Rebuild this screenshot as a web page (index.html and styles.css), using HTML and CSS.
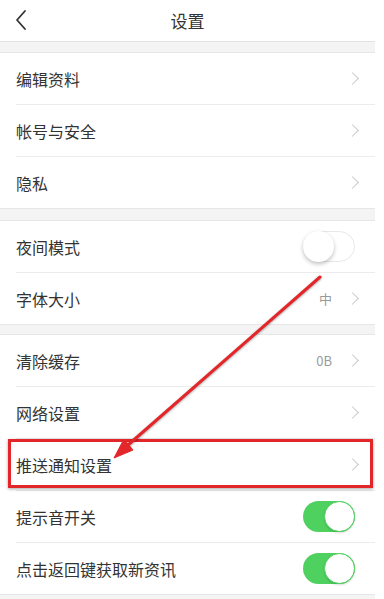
FILE: index.html
```html
<!DOCTYPE html>
<html lang="zh-CN">
<head>
<meta charset="utf-8">
<title>设置</title>
<link rel="stylesheet" href="styles.css">
</head>
<body>
<div class="app">
  <header class="topbar">
    <svg class="back" width="14" height="22" viewBox="0 0 14 22"><polyline points="11,2 3,11 11,20" fill="none" stroke="#333" stroke-width="1.8" stroke-linecap="round" stroke-linejoin="round"/></svg>
    <div class="title">设置</div>
  </header>

  <section class="group g1">
    <div class="row"><span class="label">编辑资料</span><span class="right"><span class="chev"></span></span></div>
    <div class="row"><span class="label">帐号与安全</span><span class="right"><span class="chev"></span></span></div>
    <div class="row"><span class="label">隐私</span><span class="right"><span class="chev"></span></span></div>
  </section>

  <section class="group g2">
    <div class="row"><span class="label">夜间模式</span><span class="right"><span class="toggle off"><span class="knob"></span></span></span></div>
    <div class="row"><span class="label">字体大小</span><span class="right"><span class="value">中</span><span class="chev"></span></span></div>
  </section>

  <section class="group g3">
    <div class="row"><span class="label">清除缓存</span><span class="right"><span class="value">0B</span><span class="chev"></span></span></div>
    <div class="row"><span class="label">网络设置</span><span class="right"><span class="chev"></span></span></div>
    <div class="row"><span class="label">推送通知设置</span><span class="right"><span class="chev"></span></span></div>
    <div class="row"><span class="label">提示音开关</span><span class="right"><span class="toggle on"><span class="knob"></span></span></span></div>
    <div class="row"><span class="label">点击返回键获取新资讯</span><span class="right"><span class="toggle on"><span class="knob"></span></span></span></div>
  </section>

  <div class="highlight"></div>
  <svg class="arrow" width="375" height="599" viewBox="0 0 375 599">
    <g fill="#e3262a" stroke="#e3262a">
      <line x1="320" y1="277" x2="128" y2="445" stroke-width="3" stroke-linecap="round" style="filter: drop-shadow(0 1px 1px rgba(0,0,0,0.35))"/>
      <polygon points="114,458 133,450 124,439" stroke-width="1" stroke-linejoin="round"/>
    </g>
  </svg>
</div>
</body>
</html>
```

FILE: styles.css
```css
html, body {
  margin: 0;
  padding: 0;
  background: #ffffff;
}
body {
  font-family: "Noto Sans CJK SC", "Noto Sans", sans-serif;
  color: #333333;
}
.app {
  position: relative;
  width: 375px;
  height: 599px;
  overflow: hidden;
  background: #f4f4f4;
}
.topbar {
  position: relative;
  height: 41px;
  background: #ffffff;
  border-bottom: 1px solid #e2e2e2;
  display: flex;
  align-items: center;
  justify-content: center;
}
.back {
  position: absolute;
  left: 14px;
  top: 9px;
}
.title {
  font-size: 17px;
  color: #333;
}
.group {
  background: #ffffff;
  border-top: 1px solid #e6e6e6;
}
.g1 {
  margin-top: 10px;
}
.g2 {
  margin-top: 11px;
}
.g3 {
  margin-top: 9px;
}
.row {
  height: 51px;
  margin-left: 16px;
  padding-right: 16px;
  display: flex;
  align-items: center;
  justify-content: space-between;
  border-bottom: 1px solid #ececec;
}
.group .row:last-child {
  margin-left: 0;
  padding-left: 16px;
  border-bottom-color: #e6e6e6;
}
.label {
  font-size: 16px;
  color: #333;
}
.right {
  display: flex;
  align-items: center;
}
.value {
  font-size: 13px;
  color: #9a9a9a;
  margin-right: 16px;
}
.chev {
  width: 8px;
  height: 8px;
  border-top: 1.3px solid #c9c9c9;
  border-right: 1.3px solid #c9c9c9;
  transform: rotate(45deg);
  margin-right: 2px;
}
.toggle {
  position: relative;
  width: 52px;
  height: 31px;
  border-radius: 16px;
  box-sizing: border-box;
  margin-right: 4px;
}
.toggle.off {
  background: #ffffff;
  border: 1.5px solid #e9e9e9;
}
.toggle.on {
  background: #4fd160;
}
.knob {
  position: absolute;
  top: 0;
  width: 31px;
  height: 31px;
  border-radius: 50%;
  background: #ffffff;
  box-sizing: border-box;
}
.toggle.off .knob {
  left: -1.5px;
  top: -1.5px;
  box-shadow: 0 2px 4px rgba(0,0,0,0.25);
}
.toggle.on .knob {
  right: 0;
  border: 1.5px solid #4fd160;
  box-shadow: 0 1px 2px rgba(0,0,0,0.15);
}
.highlight {
  position: absolute;
  left: 8px;
  top: 439px;
  width: 365px;
  height: 49px;
  box-sizing: border-box;
  border: 3px solid #e2262a;
  box-shadow: 0 1px 3px rgba(0,0,0,0.35);
}
.arrow {
  position: absolute;
  left: 0;
  top: 0;
  pointer-events: none;
}
```
